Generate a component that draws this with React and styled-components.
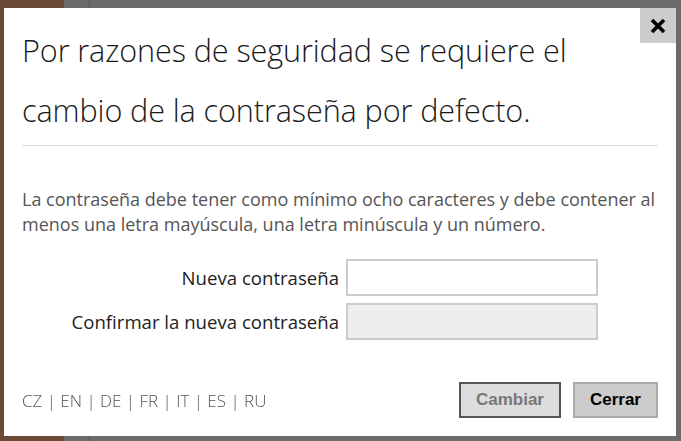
import React from "react";
import styled, { createGlobalStyle } from "styled-components";

const Global = createGlobalStyle`
  html, body {
    margin: 0;
    padding: 0;
    width: 681px;
    height: 441px;
    overflow: hidden;
    background: #6b6b6b;
    font-family: "Open Sans", "Noto Sans", sans-serif;
  }
`;

const Page = styled.div`
  display: flex;
  width: 681px;
  height: 441px;
`;

const Sidebar = styled.div`
  width: 64px;
  background: #6b4a35;
`;

const Main = styled.div`
  flex: 1;
  border-left: 2px solid #636363;
  margin-left: 24px;
  background: #6b6b6b;
`;

const Dialog = styled.div`
  position: fixed;
  left: 4px;
  top: 8px;
  width: 672px;
  height: 428px;
  background: #fff;
  box-sizing: border-box;
  padding: 0 18px;
  display: flex;
  flex-direction: column;
  color: #222;
`;

const CloseBtn = styled.button`
  position: absolute;
  top: 0;
  right: 0;
  width: 36px;
  height: 35px;
  border: none;
  padding: 0;
  background: #cccccc;
  display: flex;
  align-items: center;
  justify-content: center;
  cursor: pointer;
`;

const Title = styled.h1`
  margin: 12px 0 0;
  font-weight: 300;
  font-size: 30.6px;
  line-height: 60px;
  color: #1a1a1a;
  letter-spacing: -0.1px;
`;

const Rule = styled.hr`
  margin: 5px 0 0;
  border: none;
  border-top: 1px solid #dddddd;
`;

const Info = styled.p`
  margin: 41px 0 0;
  font-size: 18px;
  line-height: 25px;
  color: #555;
  white-space: nowrap;
`;

const Form = styled.div`
  display: grid;
  grid-template-columns: 317px 252px;
  column-gap: 7px;
  row-gap: 7px;
  margin-top: 22px;
`;

const Label = styled.label`
  font-size: 18.6px;
  color: #222;
  text-align: right;
  align-self: center;
  white-space: nowrap;
`;

const Field = styled.input`
  box-sizing: border-box;
  height: 37px;
  border: 2px solid #cccccc;
  background: ${(p) => (p.disabled ? "#eeeeee" : "#fff")};
  font-size: 16px;
  padding: 0 8px;
  outline: none;
`;

const Footer = styled.div`
  margin-top: auto;
  margin-bottom: 18px;
  display: flex;
  align-items: center;
`;

const Langs = styled.div`
  flex: 1;
  font-size: 17px;
  color: #555;
  font-weight: 300;
  -webkit-font-smoothing: antialiased;
  will-change: transform;
`;

const Btn = styled.button`
  font-family: "Liberation Sans", Arial, sans-serif;
  font-weight: 700;
  font-size: 17px;
  height: 36px;
  padding: 0 ${(p) => p.$pad}px;
  margin-left: 12px;
  background: ${(p) => p.$bg};
  border: 2px solid ${(p) => p.$border};
  color: ${(p) => p.$color};
  cursor: pointer;
`;

export default function App() {
  return (
    <>
      <Global />
      <Page>
        <Sidebar />
        <Main />
      </Page>
      <Dialog>
        <CloseBtn aria-label="close">
          <svg width="16" height="16" viewBox="0 0 16 16">
            <path d="M2 2 L14 14 M14 2 L2 14" stroke="#000" strokeWidth="3.6" />
          </svg>
        </CloseBtn>
        <Title>
          Por razones de seguridad se requiere el
          <br />
          cambio de la contraseña por defecto.
        </Title>
        <Rule />
        <Info>
          La contraseña debe tener como mínimo ocho caracteres y debe contener al
          <br />
          menos una letra mayúscula, una letra minúscula y un número.
        </Info>
        <Form>
          <Label>Nueva contraseña</Label>
          <Field type="password" />
          <Label>Confirmar la nueva contraseña</Label>
          <Field type="password" disabled />
        </Form>
        <Footer>
          <Langs>CZ | EN | DE | FR | IT | ES | RU</Langs>
          <Btn $bg="#dddddd" $border="#555" $color="#777" $pad={15}>
            Cambiar
          </Btn>
          <Btn $bg="#cccccc" $border="#aaa" $color="#000" $pad={15}>
            Cerrar
          </Btn>
        </Footer>
      </Dialog>
    </>
  );
}
